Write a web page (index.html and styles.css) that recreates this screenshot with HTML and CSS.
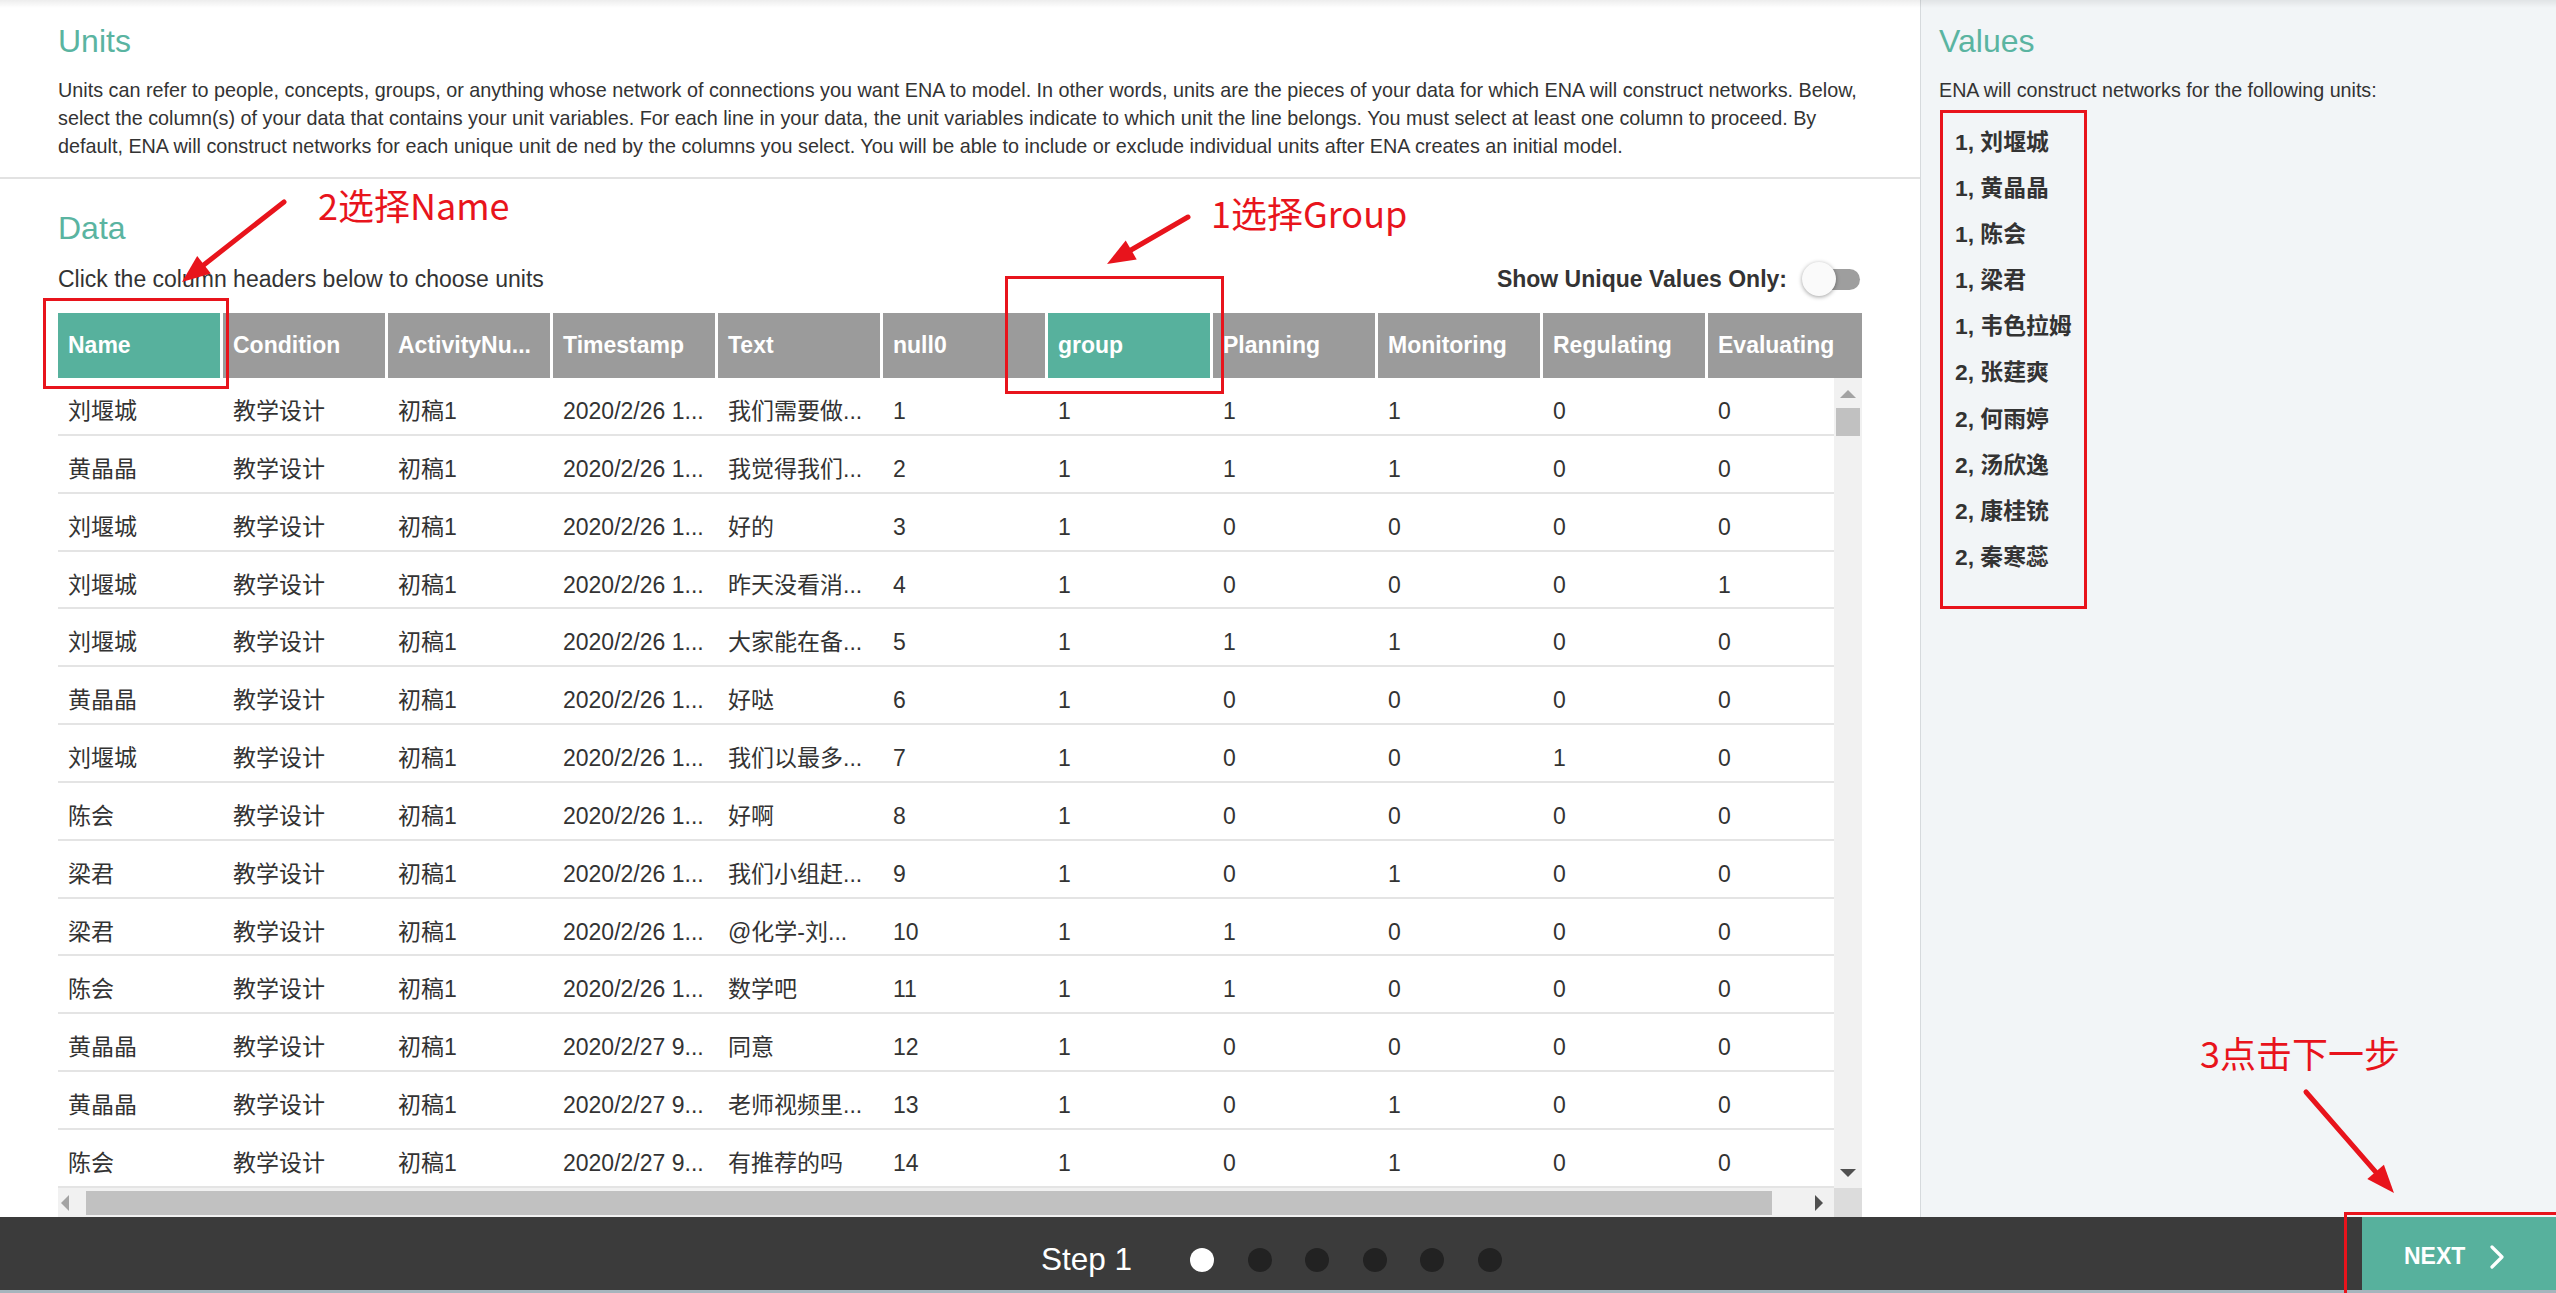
FILE: index.html
```html
<!DOCTYPE html>
<html lang="en">
<head>
<meta charset="utf-8">
<title>ENA - Units</title>
<link rel="stylesheet" href="styles.css">
</head>
<body>
<div class="app">
  <main class="main">
    <section class="intro">
      <h1 class="title">Units</h1>
      <p class="desc">Units can refer to people, concepts, groups, or anything whose network of connections you want ENA to model. In other words, units are the pieces of your data for which ENA will construct networks. Below,<br>select the column(s) of your data that contains your unit variables. For each line in your data, the unit variables indicate to which unit the line belongs. You must select at least one column to proceed. By<br>default, ENA will construct networks for each unique unit de ned by the columns you select. You will be able to include or exclude individual units after ENA creates an initial model.</p>
    </section>
    <section class="data">
      <h2 class="title">Data</h2>
      <div class="bar">
        <span>Click the column headers below to choose units</span>
        <div class="unique">
          <span>Show Unique Values Only:</span>
          <span class="toggle"><span class="knob"></span></span>
        </div>
      </div>
      <div class="grid">
        <div class="thead">
          <div class="th sel">Name</div>
          <div class="th">Condition</div>
          <div class="th">ActivityNu...</div>
          <div class="th">Timestamp</div>
          <div class="th">Text</div>
          <div class="th">null0</div>
          <div class="th sel">group</div>
          <div class="th">Planning</div>
          <div class="th">Monitoring</div>
          <div class="th">Regulating</div>
          <div class="th">Evaluating</div>
        </div>
        <div class="tbody">
          <div class="rows">
            <div class="tr"><div class="td">刘堰城</div><div class="td">教学设计</div><div class="td">初稿1</div><div class="td">2020/2/26 1...</div><div class="td">我们需要做...</div><div class="td">1</div><div class="td">1</div><div class="td">1</div><div class="td">1</div><div class="td">0</div><div class="td">0</div></div>
            <div class="tr"><div class="td">黄晶晶</div><div class="td">教学设计</div><div class="td">初稿1</div><div class="td">2020/2/26 1...</div><div class="td">我觉得我们...</div><div class="td">2</div><div class="td">1</div><div class="td">1</div><div class="td">1</div><div class="td">0</div><div class="td">0</div></div>
            <div class="tr"><div class="td">刘堰城</div><div class="td">教学设计</div><div class="td">初稿1</div><div class="td">2020/2/26 1...</div><div class="td">好的</div><div class="td">3</div><div class="td">1</div><div class="td">0</div><div class="td">0</div><div class="td">0</div><div class="td">0</div></div>
            <div class="tr"><div class="td">刘堰城</div><div class="td">教学设计</div><div class="td">初稿1</div><div class="td">2020/2/26 1...</div><div class="td">昨天没看消...</div><div class="td">4</div><div class="td">1</div><div class="td">0</div><div class="td">0</div><div class="td">0</div><div class="td">1</div></div>
            <div class="tr"><div class="td">刘堰城</div><div class="td">教学设计</div><div class="td">初稿1</div><div class="td">2020/2/26 1...</div><div class="td">大家能在备...</div><div class="td">5</div><div class="td">1</div><div class="td">1</div><div class="td">1</div><div class="td">0</div><div class="td">0</div></div>
            <div class="tr"><div class="td">黄晶晶</div><div class="td">教学设计</div><div class="td">初稿1</div><div class="td">2020/2/26 1...</div><div class="td">好哒</div><div class="td">6</div><div class="td">1</div><div class="td">0</div><div class="td">0</div><div class="td">0</div><div class="td">0</div></div>
            <div class="tr"><div class="td">刘堰城</div><div class="td">教学设计</div><div class="td">初稿1</div><div class="td">2020/2/26 1...</div><div class="td">我们以最多...</div><div class="td">7</div><div class="td">1</div><div class="td">0</div><div class="td">0</div><div class="td">1</div><div class="td">0</div></div>
            <div class="tr"><div class="td">陈会</div><div class="td">教学设计</div><div class="td">初稿1</div><div class="td">2020/2/26 1...</div><div class="td">好啊</div><div class="td">8</div><div class="td">1</div><div class="td">0</div><div class="td">0</div><div class="td">0</div><div class="td">0</div></div>
            <div class="tr"><div class="td">梁君</div><div class="td">教学设计</div><div class="td">初稿1</div><div class="td">2020/2/26 1...</div><div class="td">我们小组赶...</div><div class="td">9</div><div class="td">1</div><div class="td">0</div><div class="td">1</div><div class="td">0</div><div class="td">0</div></div>
            <div class="tr"><div class="td">梁君</div><div class="td">教学设计</div><div class="td">初稿1</div><div class="td">2020/2/26 1...</div><div class="td">@化学-刘...</div><div class="td">10</div><div class="td">1</div><div class="td">1</div><div class="td">0</div><div class="td">0</div><div class="td">0</div></div>
            <div class="tr"><div class="td">陈会</div><div class="td">教学设计</div><div class="td">初稿1</div><div class="td">2020/2/26 1...</div><div class="td">数学吧</div><div class="td">11</div><div class="td">1</div><div class="td">1</div><div class="td">0</div><div class="td">0</div><div class="td">0</div></div>
            <div class="tr"><div class="td">黄晶晶</div><div class="td">教学设计</div><div class="td">初稿1</div><div class="td">2020/2/27 9...</div><div class="td">同意</div><div class="td">12</div><div class="td">1</div><div class="td">0</div><div class="td">0</div><div class="td">0</div><div class="td">0</div></div>
            <div class="tr"><div class="td">黄晶晶</div><div class="td">教学设计</div><div class="td">初稿1</div><div class="td">2020/2/27 9...</div><div class="td">老师视频里...</div><div class="td">13</div><div class="td">1</div><div class="td">0</div><div class="td">1</div><div class="td">0</div><div class="td">0</div></div>
            <div class="tr"><div class="td">陈会</div><div class="td">教学设计</div><div class="td">初稿1</div><div class="td">2020/2/27 9...</div><div class="td">有推荐的吗</div><div class="td">14</div><div class="td">1</div><div class="td">0</div><div class="td">1</div><div class="td">0</div><div class="td">0</div></div>
          </div>
          <div class="vscroll">
            <span class="tri tri-up"></span>
            <span class="vthumb"></span>
            <span class="tri tri-down"></span>
          </div>
        </div>
        <div class="hrow">
          <div class="hscroll">
            <span class="tri tri-left"></span>
            <span class="hthumb"></span>
            <span class="tri tri-right"></span>
          </div>
          <div class="corner"></div>
        </div>
      </div>
    </section>
  </main>

  <aside class="side">
    <h1 class="title">Values</h1>
    <p class="side-desc">ENA will construct networks for the following units:</p>
    <ul class="units">
      <li>1, 刘堰城</li>
      <li>1, 黄晶晶</li>
      <li>1, 陈会</li>
      <li>1, 梁君</li>
      <li>1, 韦色拉姆</li>
      <li>2, 张莛爽</li>
      <li>2, 何雨婷</li>
      <li>2, 汤欣逸</li>
      <li>2, 康桂铳</li>
      <li>2, 秦寒蕊</li>
    </ul>
  </aside>

  <footer class="footer">
    <div class="steps">
      <span class="step-label">Step 1</span>
      <span class="dots">
        <span class="dot on"></span>
        <span class="dot"></span>
        <span class="dot"></span>
        <span class="dot"></span>
        <span class="dot"></span>
        <span class="dot"></span>
      </span>
    </div>
    <button class="next" type="button">NEXT
      <svg class="chev" width="16" height="24" viewBox="0 0 16 24"><path d="M3 2 L13 12 L3 22" fill="none" stroke="#fff" stroke-width="3.2" stroke-linecap="round" stroke-linejoin="round"/></svg>
    </button>
  </footer>

  <div class="annot">
    <svg class="annot-svg" width="2556" height="1293" viewBox="0 0 2556 1293">
      <g fill="none" stroke="#e8141c" stroke-width="3">
        <rect x="44.5" y="299.5" width="183" height="88"/>
        <rect x="1006.5" y="277.5" width="216" height="115"/>
        <rect x="1941.5" y="111.5" width="144" height="496"/>
        <rect x="2345.5" y="1213.5" width="230" height="100"/>
      </g>
      <g stroke="#e8141c" stroke-width="5" stroke-linecap="round">
        <line x1="284" y1="202" x2="204" y2="264.7"/>
        <line x1="1188" y1="217" x2="1131" y2="250"/>
        <line x1="2306" y1="1092" x2="2375.6" y2="1171.9"/>
      </g>
      <g fill="#e8141c">
        <polygon points="182,282 197.2,256 210.8,273.4"/>
        <polygon points="1107,264 1125.7,240.4 1136.7,259.4"/>
        <polygon points="2394,1193 2367.3,1179.1 2383.9,1164.7"/>
      </g>
    </svg>
    <span class="note note-name">2选择Name</span>
    <span class="note note-group">1选择Group</span>
    <span class="note note-next">3点击下一步</span>
  </div>
</div>
</body>
</html>
```
FILE: styles.css
```css
* { box-sizing: border-box; }

html, body {
  margin: 0;
  padding: 0;
}

body {
  width: 2556px;
  height: 1293px;
  overflow: hidden;
  font-family: "Liberation Sans", Arial, "Noto Sans CJK SC", sans-serif;
  color: #333;
  background: #fff;
}

.app {
  position: relative;
  width: 2556px;
  height: 1293px;
  display: grid;
  grid-template-columns: 1921px 1fr;
  grid-template-rows: 1217px 76px;
}

.app::before {
  content: "";
  position: absolute;
  left: 0;
  right: 0;
  top: 0;
  height: 8px;
  background: linear-gradient(rgba(0, 0, 0, 0.07), rgba(0, 0, 0, 0));
  z-index: 2;
  pointer-events: none;
}

.main {
  background: #fff;
  border-right: 1px solid #d6dadd;
  overflow: hidden;
}

.title {
  margin: 0;
  font-size: 32px;
  line-height: 40px;
  font-weight: normal;
  color: #5ab4a1;
}

.intro {
  padding: 21px 58px 17px;
  border-bottom: 2px solid #e2e2e2;
}

.desc {
  margin: 15px 0 0;
  font-size: 19.8px;
  line-height: 28px;
  white-space: nowrap;
}

.data {
  padding: 29px 58px 0;
}

.bar {
  display: flex;
  justify-content: space-between;
  align-items: center;
  margin-top: 16px;
  height: 30px;
  font-size: 23px;
  line-height: 30px;
}

.unique {
  display: flex;
  align-items: center;
  gap: 21px;
  font-weight: bold;
  padding-right: 2px;
}

.toggle {
  position: relative;
  width: 52px;
  height: 21px;
  border-radius: 11px;
  background: #9e9e9e;
}

.knob {
  position: absolute;
  left: -6px;
  top: -7px;
  width: 34px;
  height: 34px;
  border-radius: 50%;
  background: #fafafa;
  box-shadow: 0 1px 4px rgba(0, 0, 0, 0.38);
}

.grid {
  margin-top: 19px;
  width: 1804px;
}

.thead {
  display: flex;
  height: 65px;
  overflow: hidden;
}

.th {
  flex: 0 0 165px;
  display: flex;
  align-items: center;
  padding-left: 10px;
  background: #9b9b9b;
  border-right: 3px solid #fff;
  color: #fff;
  font-weight: bold;
  font-size: 23px;
  white-space: nowrap;
  overflow: hidden;
}

.th.sel {
  background: #57b19d;
}

.tbody {
  display: flex;
  height: 810px;
}

.rows {
  width: 1776px;
  overflow: hidden;
}

.tr {
  display: flex;
  height: 57.85px;
  border-bottom: 2px solid #e4e4e4;
}

.td {
  flex: 0 0 165px;
  padding: 10px 0 0 10px;
  font-size: 23px;
  line-height: 46px;
  white-space: nowrap;
  overflow: hidden;
}

.vscroll {
  width: 28px;
  background: #f1f1f1;
  display: flex;
  flex-direction: column;
  align-items: center;
}

.tri {
  display: block;
  width: 0;
  height: 0;
}

.tri-up {
  margin-top: 12px;
  border-left: 8px solid transparent;
  border-right: 8px solid transparent;
  border-bottom: 8px solid #a3a3a3;
}

.vthumb {
  display: block;
  width: 24px;
  height: 28px;
  margin-top: 10px;
  background: #c1c1c1;
}

.tri-down {
  margin-top: auto;
  margin-bottom: 11px;
  border-left: 8px solid transparent;
  border-right: 8px solid transparent;
  border-top: 8px solid #505050;
}

.hrow {
  display: flex;
  height: 29px;
}

.hscroll {
  width: 1776px;
  background: #f1f1f1;
  display: flex;
  align-items: center;
}

.tri-left {
  margin-left: 3px;
  border-top: 8px solid transparent;
  border-bottom: 8px solid transparent;
  border-right: 8px solid #a3a3a3;
}

.hthumb {
  display: block;
  width: 1686px;
  height: 24px;
  margin-left: 17px;
  background: #c1c1c1;
}

.tri-right {
  margin-left: auto;
  margin-right: 11px;
  border-top: 8px solid transparent;
  border-bottom: 8px solid transparent;
  border-left: 8px solid #505050;
}

.corner {
  width: 28px;
  background: #dcdcdc;
}

.side {
  background: #f2f5f7;
  padding: 21px 18px 0;
}

.side-desc {
  margin: 15px 0 0;
  font-size: 19.7px;
  line-height: 28px;
}

.units {
  list-style: none;
  margin: 15px 0 0;
  padding: 0 0 0 16px;
}

.units li {
  font-weight: bold;
  font-size: 22.8px;
  line-height: 46.1px;
}

.footer {
  grid-column: 1 / -1;
  display: grid;
  grid-template-columns: 1fr auto 1fr;
  background: #3b3b3b;
  border-bottom: 3px solid #a6b5bd;
}

.steps {
  grid-column: 2;
  display: flex;
  align-items: center;
  padding-top: 12px;
  margin-right: 13px;
}

.step-label {
  color: #fff;
  font-size: 31.5px;
}

.dots {
  display: flex;
  gap: 33.6px;
  margin-left: 58px;
}

.dot {
  width: 24px;
  height: 24px;
  border-radius: 50%;
  background: #222;
}

.dot.on {
  background: #fff;
}

.next {
  grid-column: 3;
  justify-self: end;
  width: 194px;
  display: flex;
  align-items: center;
  gap: 24px;
  padding: 6px 0 0 42px;
  border: 0;
  margin: 0;
  background: #57b19d;
  color: #fff;
  font-family: "Liberation Sans", Arial, sans-serif;
  font-weight: bold;
  font-size: 23px;
}

.chev {
  display: block;
}

.annot {
  position: absolute;
  inset: 0;
  pointer-events: none;
  z-index: 5;
}

.annot-svg {
  position: absolute;
  left: 0;
  top: 0;
}

.note {
  position: absolute;
  font-family: "Noto Sans CJK SC", sans-serif;
  font-size: 36px;
  line-height: 36px;
  color: #e8141c;
  white-space: nowrap;
}

.note-name {
  left: 318px;
  top: 186px;
}

.note-group {
  left: 1211px;
  top: 194px;
}

.note-next {
  left: 2200px;
  top: 1034px;
}
```
